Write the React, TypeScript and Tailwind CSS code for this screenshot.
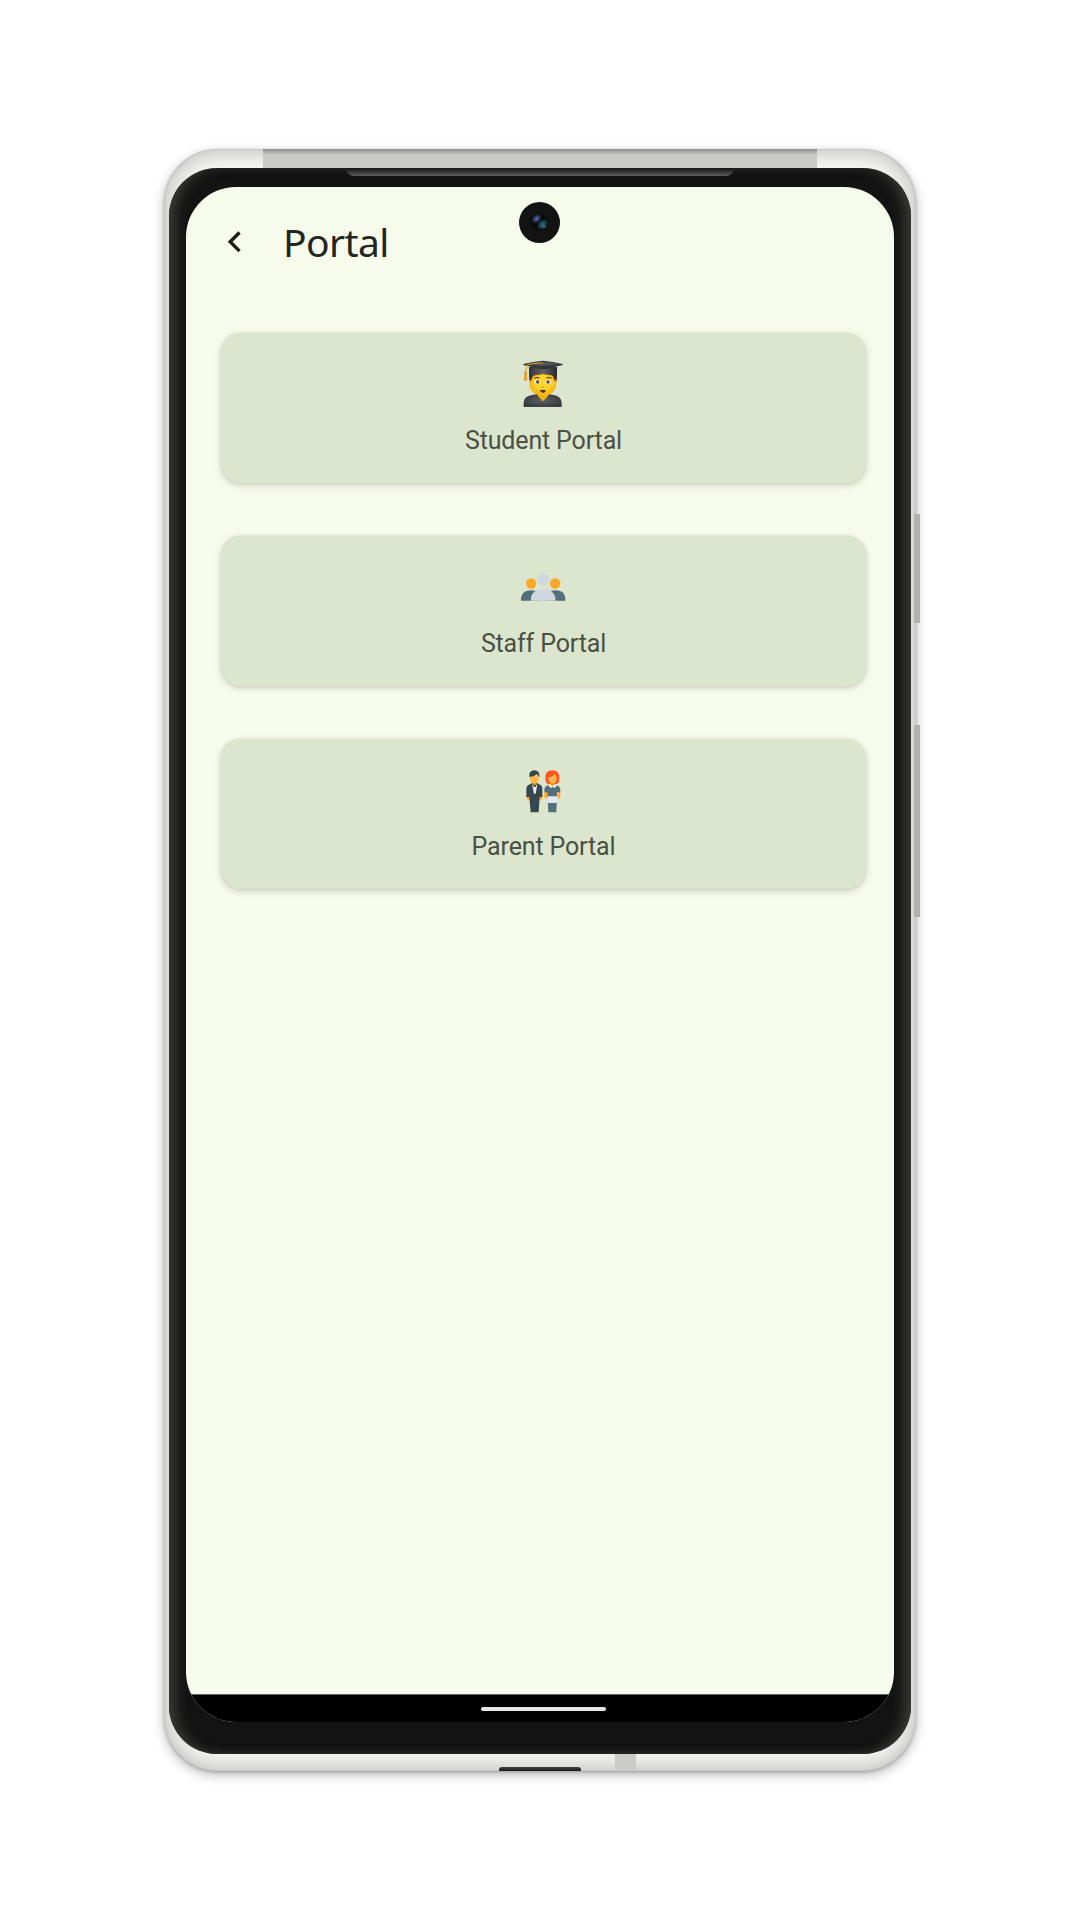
import React from "react";

function StudentIcon() {
  return (
    <svg className="mr-[1px] h-[54px] w-[50px]" viewBox="205 36 150 162">
      <defs>
        <radialGradient id="face" cx="50%" cy="40%" r="60%">
          <stop offset="0.4" stopColor="#fdd62e" />
          <stop offset="1" stopColor="#f3b010" />
        </radialGradient>
        <linearGradient id="cap" x1="0" x2="1">
          <stop offset="0" stopColor="#303134" />
          <stop offset="0.5" stopColor="#626466" />
          <stop offset="1" stopColor="#27282b" />
        </linearGradient>
        <radialGradient id="gown" cx="50%" cy="50%" r="55%">
          <stop offset="0" stopColor="#626365" />
          <stop offset="1" stopColor="#38393c" />
        </radialGradient>
      </defs>
      <path d="M238 82h84v22q-2 8-6 9l-72-2q-6-3-6-9z" fill="#6c3d16" />
      <path d="M222 185v-10q0-22 25-25l18-3h30l17 3q24 4 24 25v10z" fill="url(#gown)" />
      <path d="M264 144h32v8q-5 5-16 17q-11-12-16-17z" fill="#f2b411" />
      <path d="M239 96q41-18 81 0v22c0 21-20 35-40 35s-41-14-41-35z" fill="url(#face)" />
      <path d="M239 96l3 14q7-8 8-18zM320 96l-3 14q-7-8-8-18z" fill="#7b4617" />
      <path d="M254 100q8-5 15 0M290 100q8-5 15 0" stroke="#5a320f" strokeWidth="3.5" fill="none" />
      <ellipse cx="263" cy="111" rx="9" ry="6.5" fill="#f3ead9" />
      <ellipse cx="296" cy="111" rx="9" ry="6.5" fill="#f3ead9" />
      <circle cx="264" cy="111" r="5" fill="#5f4740" />
      <circle cx="295" cy="111" r="5" fill="#5f4740" />
      <path d="M275 125q5 3 9 0" stroke="#dd9411" strokeWidth="3" fill="none" />
      <path d="M270 136q10-3 19 0q-3 8-9 8t-10-8z" fill="#4d3524" />
      <path d="M238 66h84v25l-2 14-9-13q-30-10-61 0l-10 13-2-14z" fill="url(#cap)" />
      <path d="M221 57q29-8 59-10q30 2 59 10v3q-27 6-51 13h-16q-24-7-51-13z" fill="#34363a" />
      <path d="M232 56q25-5 48-6q24 1 48 6q-24 5-48 7q-24-2-48-7z" fill="#515357" />
      <path d="M280 54q-30-1-48 6l-4 20" stroke="#d29a35" strokeWidth="3" fill="none" />
      <path d="M225 78h6l2 28q-6 3-11 0z" fill="#e2a534" />
      <path d="M224 85h8" stroke="#b77b20" strokeWidth="2" />
      <path d="M222 184h114" stroke="#292a2d" strokeWidth="2" />
    </svg>
  );
}

function StaffIcon() {
  return (
    <svg className="mr-[1px] h-[54px] w-[50px]" viewBox="204 31.5 150 162">
      <circle cx="243.500" cy="102" r="15.500" fill="#ffa726" />
      <circle cx="315.500" cy="102" r="15.500" fill="#ffa726" />
      <path d="M213 153.500v-9q4-22 31-22t30 22v9zM285 153.500v-9q4-22 31-22t30 22v9z" fill="#546e7a" />
      <circle cx="280" cy="90" r="18.500" fill="#cfd8dc" />
      <path d="M243 153.500v-10q7-26 36.500-26t36.500 26v10z" fill="#cfd8dc" />
    </svg>
  );
}

function ParentIcon() {
  return (
    <svg className="mr-[1px] h-[54px] w-[50px]" viewBox="203 24 150 162">
      <path d="M228 118h12v17q-9 3-11-5zM265 118h11v12q-3 8-12 5z" fill="#ffa726" />
      <path d="M244 80h17v11l-8 10-9-10z" fill="#ff9800" />
      <path d="M239 88l7-4 7 9 7-9 7 4q9 3 9 14v24h-8l-3 46h-24l-4-46h-9v-24q0-11 11-14z" fill="#37474f" />
      <path d="M245 88l8 7 8-7-5 28h-5z" fill="#eceff1" />
      <path d="M249 90l4 2 4-2v6l-4-2-4 2z" fill="#263238" />
      <path d="M237 66q-2-20 15-20q17 0 15 20z" fill="#37474f" />
      <path d="M239 65l10-1 11-7 5 7v7q-1 14-13 14t-13-14z" fill="#ffb74d" />
      <path d="M285 70q-1-24 21-24t21 24q0 16-9 18h-24q-9-2-9-18z" fill="#ff5722" />
      <path d="M282 110h9v20q-9 3-9-6zM322 110h8v14q0 9-9 6z" fill="#ffa726" />
      <path d="M294 91h24q11 2 12 13v8h-10l-2 60h-24l-3-60h-9v-8q1-11 12-13z" fill="#546e7a" />
      <path d="M300 82h13v9l-6 6-7-6z" fill="#ff9800" />
      <path d="M295 66q12 0 18-10l6 11v4q-1 14-12 14t-12-14z" fill="#ffb74d" />
      <path d="M297 86l10 8 10-8 3 7-9 6-4-4-4 4-9-6z" fill="#eceff1" />
      <path d="M291 124h30v15q-1 5-5 5h-20q-5 0-5-5z" fill="#dfe9f7" />
    </svg>
  );
}

const portals = [
  { label: "Student Portal", Icon: StudentIcon },
  { label: "Staff Portal", Icon: StaffIcon },
  { label: "Parent Portal", Icon: ParentIcon },
];

function Camera() {
  return (
    <div className="absolute top-[15px] left-[333px] size-[41px] rounded-full bg-[#131313]">
      <svg viewBox="0 0 42 42" className="size-full">
        <defs>
          <radialGradient id="violet"><stop stopColor="#6f7dcb" /><stop offset="1" stopColor="#30345c" stopOpacity="0.300" /></radialGradient>
          <radialGradient id="teal"><stop stopColor="#2b7c82" /><stop offset="1" stopColor="#1d4850" stopOpacity="0.400" /></radialGradient>
          <radialGradient id="lens"><stop offset="0.550" stopColor="#060809" /><stop offset="1" stopColor="#131313" /></radialGradient>
        </defs>
        <circle cx="21" cy="20.500" r="10.500" fill="url(#lens)" />
        <ellipse cx="18" cy="17.200" rx="5.500" ry="4" transform="rotate(-40 18 17.200)" fill="url(#violet)" />
        <ellipse cx="24" cy="23" rx="6" ry="4.300" transform="rotate(-42 24 23)" fill="url(#teal)" />
        <circle cx="25.500" cy="25" r="2.500" fill="url(#violet)" />
      </svg>
    </div>
  );
}

export default function App() {
  return (
    <div className="flex h-[1920px] w-[1080px] justify-center overflow-hidden bg-white pt-[149px]">
      <div className="relative h-[1622px] w-[752px] rounded-[54px] bg-[#fafaf9] px-[5px] pt-[19px] pb-[17px] shadow-[0_4px_12px_rgba(0,0,0,0.28),0_1px_3px_rgba(0,0,0,0.22),inset_0_0_22px_5px_#c0c1bb,inset_0_0_2px_#8d8e88]">
        <div className="absolute top-0 left-[99px] h-[19px] w-[554px] bg-linear-to-b from-[#8e8f89] via-[#c9cac5] via-30% to-[#cbccc7]" />
        <div className="absolute right-[-4px] top-[365px] h-[109px] w-[6px] bg-[#b1b2ad]" />
        <div className="absolute right-[-4px] top-[576px] h-[192px] w-[6px] bg-[#b1b2ad]" />
        <div className="absolute bottom-0 left-[451px] h-[17px] w-[21px] bg-[#cbccc7]" />
        <div className="absolute bottom-0 left-[335px] h-[4px] w-[82px] rounded-t-[3px] bg-linear-to-b from-[#45463f] to-[#1a1a16]" />

        <div className="relative h-full rounded-[48px] bg-[#131313] px-[17px] pt-[19px] pb-[32px] shadow-[inset_12px_0_14px_-6px_#3d3e39,inset_-12px_0_14px_-6px_#3d3e39,inset_0_-8px_10px_-8px_#24211e]">
          <div className="absolute top-0 left-[177px] h-[8px] w-[388px] rounded-b-[8px] bg-linear-to-b from-[#151515] to-[#5d5d5a]" />
          <main className="relative flex h-full flex-col overflow-hidden rounded-[50px] bg-[#f7fbeb]">
            <Camera />
            <header className="flex h-[110px] items-center pl-[36px]">
              <svg className="h-[24px] w-[24px]" viewBox="0 0 24 24" fill="none" stroke="#1a1d16" strokeWidth="3.400">
                <path d="M17.500 2.500L8.200 11.800L17.500 21.100" />
              </svg>
              <h1 className="ml-[37px] font-['Noto_Sans'] text-[39px] leading-[54px] tracking-[-0.600px] text-[#23261f]">Portal</h1>
            </header>
            <nav className="mt-[36px] ml-[35px] flex w-[645px] flex-col gap-[53px]">
              {portals.map(({ label, Icon }) => (
                <button key={label} className="flex h-[150px] flex-col items-center rounded-[20px] bg-[#dce6cf] pt-[24px] shadow-[0_2px_7px_rgba(0,0,0,0.18),0_0_2px_rgba(0,0,0,0.10)]">
                  <Icon />
                  <span className="mt-[14px] font-[Roboto] text-[25px] leading-[32px] tracking-[-0.150px] text-[#4a5044]">{label}</span>
                </button>
              ))}
            </nav>
            <footer className="mt-auto flex h-[28px] items-start justify-center border-t border-[#66695f] bg-black pt-[12px] pl-[6px]">
              <div className="h-[4px] w-[125px] rounded-[2px] bg-[#e6e6e6]" />
            </footer>
          </main>
        </div>
      </div>
    </div>
  );
}
